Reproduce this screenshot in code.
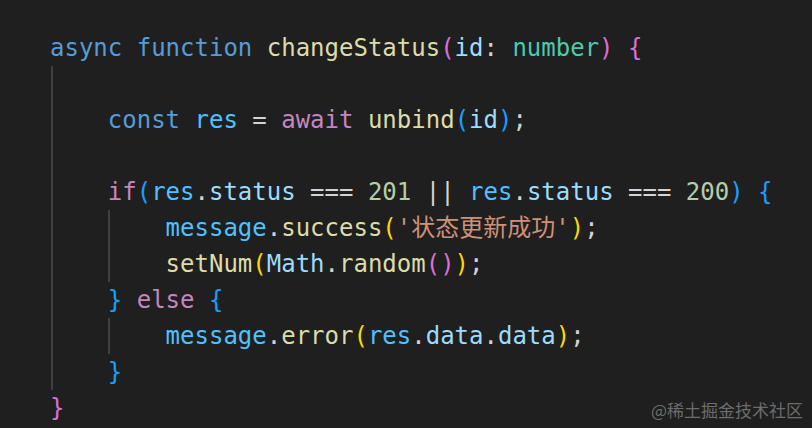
import React from "react";

const C = {
  kw: "text-[#569cd6]",
  ctl: "text-[#c586c0]",
  fn: "text-[#dcdcaa]",
  v: "text-[#9cdcfe]",
  cv: "text-[#4fc1ff]",
  ty: "text-[#4ec9b0]",
  num: "text-[#b5cea8]",
  str: "text-[#ce9178]",
  p: "text-[#d4d4d4]",
  b1: "text-[#da70d6]",
  b2: "text-[#179fff]",
  b3: "text-[#ffd700]",
};

function Line({ parts }) {
  return (
    <div className="h-[36px] leading-[36px] whitespace-pre">
      {parts.length === 0 ? " " : parts.map(([t, c], i) => (
        <span key={i} className={c ? C[c] : C.p}>{t}</span>
      ))}
    </div>
  );
}

function Block({ col, children }) {
  return (
    <div className="relative">
      <span
        className={`absolute top-0 bottom-0 w-[2px] bg-[#404040] ${col === 0 ? "left-[1px]" : "left-[4ch]"}`}
      />
      {children}
    </div>
  );
}

export default function App() {
  return (
    <div className="relative w-[812px] h-[428px] bg-[#1f1f1f] overflow-hidden">
      <div
        className="pt-[30px] pl-[50px] text-[24px]"
        style={{ fontFamily: '"DejaVu Sans Mono", "Noto Sans CJK SC", monospace' }}
      >
        <Line parts={[["async", "kw"], [" "], ["function", "kw"], [" "], ["changeStatus", "fn"], ["(", "b1"], ["id", "v"], [": "], ["number", "ty"], [")", "b1"], [" "], ["{", "b1"]]} />
        <Block col={0}>
          <Line parts={[]} />
          <Line parts={[["    "], ["const", "kw"], [" "], ["res", "cv"], [" = "], ["await", "ctl"], [" "], ["unbind", "fn"], ["(", "b2"], ["id", "v"], [")", "b2"], [";"]]} />
          <Line parts={[]} />
          <Line parts={[["    "], ["if", "ctl"], ["(", "b2"], ["res", "cv"], ["."], ["status", "v"], [" === "], ["201", "num"], [" || "], ["res", "cv"], ["."], ["status", "v"], [" === "], ["200", "num"], [")", "b2"], [" "], ["{", "b2"]]} />
          <Block col={4}>
            <Line parts={[["        "], ["message", "cv"], ["."], ["success", "fn"], ["(", "b3"], ["'状态更新成功'", "str"], [")", "b3"], [";"]]} />
            <Line parts={[["        "], ["setNum", "fn"], ["(", "b3"], ["Math", "v"], ["."], ["random", "fn"], ["(", "b1"], [")", "b1"], [")", "b3"], [";"]]} />
          </Block>
          <Line parts={[["    "], ["}", "b2"], [" "], ["else", "ctl"], [" "], ["{", "b2"]]} />
          <Block col={4}>
            <Line parts={[["        "], ["message", "cv"], ["."], ["error", "fn"], ["(", "b3"], ["res", "cv"], ["."], ["data", "v"], ["."], ["data", "v"], [")", "b3"], [";"]]} />
          </Block>
          <Line parts={[["    "], ["}", "b2"]]} />
        </Block>
        <Line parts={[["}", "b1"]]} />
      </div>
      <div
        className="absolute right-[9px] bottom-[8px] text-[17px] leading-[20px] text-[#6c6c6c]"
        style={{ fontFamily: '"Noto Sans CJK SC", "Noto Sans", sans-serif' }}
      >
        @稀土掘金技术社区
      </div>
    </div>
  );
}
